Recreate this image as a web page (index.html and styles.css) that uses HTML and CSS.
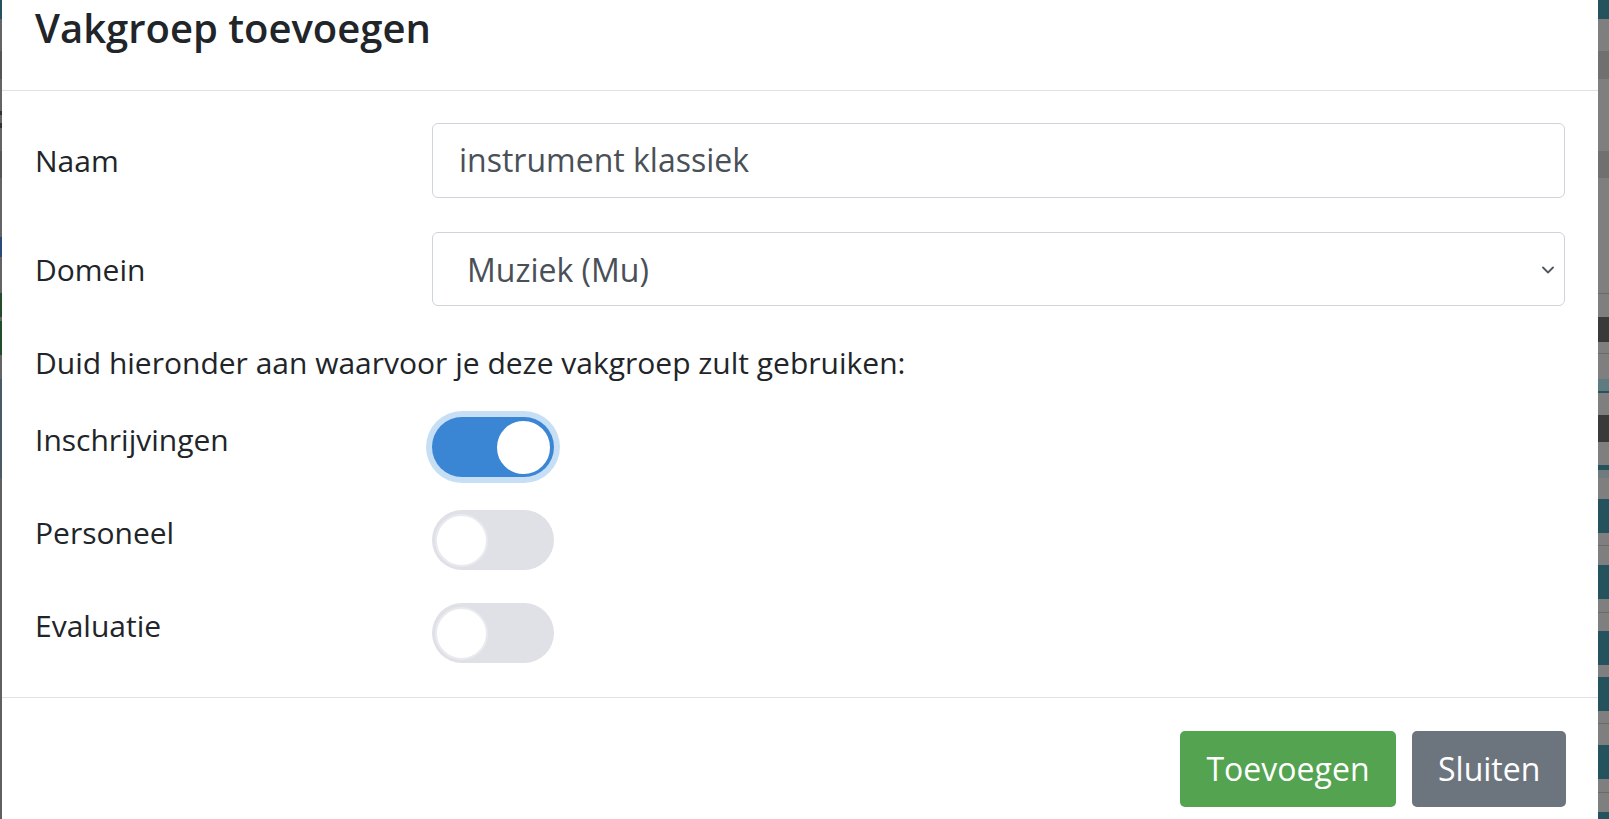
FILE: index.html
```html
<!DOCTYPE html>
<html lang="nl">
<head>
<meta charset="utf-8">
<title>Vakgroep toevoegen</title>
<link rel="stylesheet" href="styles.css">
</head>
<body>
<div class="modal">
  <div class="modal-header">
    <h4 class="modal-title">Vakgroep toevoegen</h4>
  </div>
  <div class="modal-body">
    <div class="form-row row-naam">
      <label class="form-label">Naam</label>
      <div class="form-control">instrument klassiek</div>
    </div>
    <div class="form-row row-domein">
      <label class="form-label">Domein</label>
      <div class="form-select">
        <span>Muziek (Mu)</span>
        <svg class="chevron" width="12" height="8" viewBox="0 0 12 8"><path d="M1 1.5 L6 6.5 L11 1.5" fill="none" stroke="#4f565e" stroke-width="1.8" stroke-linecap="round" stroke-linejoin="round"/></svg>
      </div>
    </div>
    <p class="hint">Duid hieronder aan waarvoor je deze vakgroep zult gebruiken:</p>
    <div class="switches">
      <div class="switch-row">
        <span class="switch-label">Inschrijvingen</span>
        <span class="switch on focus"><span class="knob"></span></span>
      </div>
      <div class="switch-row">
        <span class="switch-label">Personeel</span>
        <span class="switch"><span class="knob"></span></span>
      </div>
      <div class="switch-row">
        <span class="switch-label">Evaluatie</span>
        <span class="switch"><span class="knob"></span></span>
      </div>
    </div>
  </div>
  <div class="modal-footer">
    <button class="btn btn-success">Toevoegen</button>
    <button class="btn btn-secondary">Sluiten</button>
  </div>
</div>
</body>
</html>
```
FILE: styles.css
```css
html, body {
  margin: 0;
  padding: 0;
  height: 819px;
  overflow: hidden;
}

body {
  font-family: "Open Sans", "Liberation Sans", sans-serif;
  color: #212529;
  background:
    linear-gradient(to bottom,
      #24535d 0, #24535d 19px,
      #646464 19px, #646464 51px,
      #545454 51px, #545454 79px,
      #646464 79px, #646464 111px,
      #333 111px, #333 115px,
      #646464 115px, #646464 123px,
      #333 123px, #333 128px,
      #646464 128px, #646464 151px,
      #555 151px, #555 178px,
      #646464 178px, #646464 237px,
      #2a4a7a 237px, #2a4a7a 257px,
      #646464 257px, #646464 293px,
      #234d2a 293px, #234d2a 317px,
      #646464 317px, #646464 321px,
      #234d2a 321px, #234d2a 355px,
      #646464 355px, #646464 379px,
      #4a5a66 379px, #4a5a66 478px,
      #606060 478px, #606060 100%) left top / 2px 100% no-repeat,
    linear-gradient(to bottom,
      #24535d 0, #24535d 19px,
      #7f7f7f 19px, #7f7f7f 51px,
      #707070 51px, #707070 79px,
      #7f7f7f 79px, #7f7f7f 151px,
      #707070 151px, #707070 178px,
      #7f7f7f 178px, #7f7f7f 293px,
      #6a6a6a 293px, #6a6a6a 294px,
      #7f7f7f 294px, #7f7f7f 317px,
      #3a3a3a 317px, #3a3a3a 342px,
      #7f7f7f 342px, #7f7f7f 353px,
      #6a6a6a 353px, #6a6a6a 354px,
      #7f7f7f 354px, #7f7f7f 379px,
      #5e7c80 379px, #5e7c80 391px,
      #24535d 391px, #24535d 393px,
      #7f7f7f 393px, #7f7f7f 415px,
      #3a3a3a 415px, #3a3a3a 442px,
      #7f7f7f 442px, #7f7f7f 465px,
      #24535d 465px, #24535d 470px,
      #6f7b7d 470px, #6f7b7d 478px,
      #7f7f7f 478px, #7f7f7f 499px,
      #24535d 499px, #24535d 533px,
      #7f7f7f 533px, #7f7f7f 545px,
      #6a6a6a 545px, #6a6a6a 546px,
      #7f7f7f 546px, #7f7f7f 565px,
      #24535d 565px, #24535d 599px,
      #7f7f7f 599px, #7f7f7f 612px,
      #6a6a6a 612px, #6a6a6a 613px,
      #7f7f7f 613px, #7f7f7f 631px,
      #24535d 631px, #24535d 665px,
      #7f7f7f 665px, #7f7f7f 677px,
      #24535d 677px, #24535d 711px,
      #7f7f7f 711px, #7f7f7f 723px,
      #6a6a6a 723px, #6a6a6a 724px,
      #7f7f7f 724px, #7f7f7f 745px,
      #24535d 745px, #24535d 779px,
      #7f7f7f 779px, #7f7f7f 792px,
      #6a6a6a 792px, #6a6a6a 793px,
      #7f7f7f 793px, #7f7f7f 812px,
      #24535d 812px, #24535d 100%) right top / 11px 100% no-repeat,
    #7f7f7f;
}

.modal {
  margin-left: 2px;
  width: 1596px;
  height: 819px;
  background: #fff;
  display: flex;
  flex-direction: column;
}

.modal-header {
  height: 91px;
  box-sizing: border-box;
  border-bottom: 1px solid #dee2e6;
  padding: 3px 33px 0;
  flex: none;
}

.modal-title {
  margin: 0;
  font-size: 40px;
  font-weight: 600;
  line-height: 49px;
  color: #212529;
}

.modal-body {
  padding: 0 33px;
  height: 606px;
  box-sizing: border-box;
  flex: none;
}

.form-row {
  display: flex;
  align-items: center;
}

.row-naam { margin-top: 32px; }
.row-domein { margin-top: 34px; }

.form-label {
  width: 397px;
  flex: none;
  font-size: 30px;
  line-height: 43px;
}

.form-control,
.form-select {
  flex: 1;
  box-sizing: border-box;
  height: 75px;
  border: 1px solid #ced4da;
  border-radius: 6px;
  font-size: 32px;
  color: #495057;
  display: flex;
  align-items: center;
}

.form-control {
  padding-left: 26px;
  padding-bottom: 2px;
}

.form-select {
  height: 74px;
  padding-left: 34px;
  padding-right: 10px;
  justify-content: space-between;
}

.chevron {
  flex: none;
  margin-top: 2px;
}

.hint {
  margin: 35px 0 0;
  font-size: 30px;
  line-height: 43px;
}

.switches {
  margin-top: 33px;
  display: flex;
  flex-direction: column;
  gap: 33px;
}

.switch-row {
  display: flex;
  align-items: center;
}

.switch-label {
  width: 397px;
  flex: none;
  font-size: 30px;
  line-height: 43px;
  margin-bottom: 15px;
}

.switch {
  position: relative;
  width: 122px;
  height: 60px;
  border-radius: 30px;
  background: #dfe1e6;
  flex: none;
}

.switch.on {
  background: #3a86d4;
}

.switch.focus {
  box-shadow: 0 0 0 6px #c6dff5;
}

.knob {
  position: absolute;
  top: 4px;
  left: 3px;
  width: 49px;
  height: 49px;
  border-radius: 50%;
  background: #fff;
  border: 2px solid #e8eaee;
}

.switch.on .knob {
  left: auto;
  right: 4px;
  border-color: #fff;
}

.modal-footer {
  flex: none;
  border-top: 1px solid #dee2e6;
  padding: 33px 32px 0 0;
  display: flex;
  justify-content: flex-end;
  gap: 16px;
}

.btn {
  height: 76px;
  border: none;
  border-radius: 5px;
  font-family: "Open Sans", "Liberation Sans", sans-serif;
  font-size: 32px;
  color: #fff;
  padding: 0 26px 2px;
}

.btn-success {
  background: #53a351;
  width: 216px;
}

.btn-secondary {
  background: #6c757d;
  width: 154px;
}
```
